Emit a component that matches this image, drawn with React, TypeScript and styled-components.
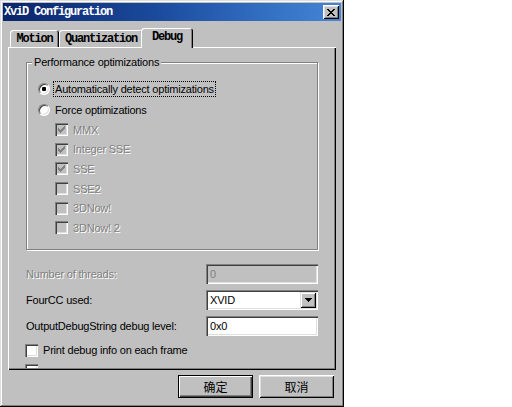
import React from "react";
import styled, { createGlobalStyle } from "styled-components";

const GlobalStyle = createGlobalStyle`
  html, body { margin: 0; padding: 0; background: #fff; }
  body {
    font-family: "Liberation Sans", Arial, sans-serif;
    font-size: 11px;
    letter-spacing: -0.2px;
    color: #000;
  }
`;

const MONO = `"Liberation Mono", "DejaVu Sans Mono", monospace`;
const CJK = `"Liberation Sans", "Noto Sans CJK SC", sans-serif`;

const Window = styled.div`
  width: 344px;
  height: 407px;
  box-sizing: border-box;
  background: #c0c0c0;
  padding: 3px;
  display: flex;
  flex-direction: column;
  box-shadow: inset -1px -1px #000, inset 1px 1px #dfdfdf,
    inset -2px -2px #808080, inset 2px 2px #fff;
`;

const TitleBar = styled.div`
  height: 18px;
  flex: none;
  display: flex;
  align-items: center;
  justify-content: space-between;
  padding: 0 2px 0 1px;
  background: linear-gradient(90deg, #0a246a 0%, #1a4a9c 45%, #3472c6 80%, #4584d6 100%);
`;

const Title = styled.span`
  font-family: ${MONO};
  font-weight: bold;
  font-size: 12px;
  letter-spacing: -1.2px;
  color: #fff;
  line-height: 18px;
`;

const CloseButton = styled.div`
  width: 16px;
  height: 14px;
  box-sizing: border-box;
  background: #c0c0c0;
  display: flex;
  align-items: center;
  justify-content: center;
  box-shadow: inset 1px 1px #fff, inset -1px -1px #000,
    inset 2px 2px #dfdfdf, inset -2px -2px #808080;
`;

const Body = styled.div`
  flex: 1;
  display: flex;
  flex-direction: column;
  padding: 7px 5px 0 5px;
`;

const TabRow = styled.div`
  display: flex;
  align-items: flex-end;
  height: 19px;
  padding-left: 2px;
  flex: none;
`;

const Tab = styled.div<{ $active?: boolean; $w: number }>`
  position: relative;
  z-index: ${(p) => (p.$active ? 1 : 0)};
  box-sizing: border-box;
  width: ${(p) => p.$w + (p.$active ? 4 : 0)}px;
  height: ${(p) => (p.$active ? 20 : 17)}px;
  margin: ${(p) => (p.$active ? "0 -2px -1px -2px" : "0")};
  padding-bottom: ${(p) => (p.$active ? 3 : 0)}px;
  background: #c0c0c0;
  border-radius: 3px 3px 0 0;
  box-shadow: inset 1px 1px #fff, inset -1px 0 #000, inset -2px 0 #808080;
  display: flex;
  align-items: center;
  justify-content: center;
  font-family: ${MONO};
  font-weight: bold;
  font-size: 12px;
  letter-spacing: -1.2px;
  color: #000;
`;

const Panel = styled.div`
  flex: none;
  height: 323px;
  box-sizing: border-box;
  padding: 9px 18px 0 18px;
  display: flex;
  flex-direction: column;
  overflow: hidden;
  background: #c0c0c0;
  box-shadow: inset 1px 1px #fff, inset -1px -1px #000, inset -2px -2px #808080;
`;

const Group = styled.fieldset`
  margin: 0;
  padding: 11px 0 11px 0;
  min-width: 0;
  border: 1px solid #808080;
  box-shadow: inset 1px 1px #fff, 1px 1px #fff;
`;

const Legend = styled.legend`
  margin-left: 5px;
  padding: 0 2px;
  line-height: 12px;
  background: #c0c0c0;
`;

const RadioRow = styled.div<{ $mt?: number }>`
  display: flex;
  align-items: center;
  height: 20px;
  padding-left: 11px;
  gap: 3px;
  margin-top: ${(p) => p.$mt ?? 0}px;
`;

const Radio = styled.div`
  width: 12px;
  height: 12px;
  flex: none;
  box-sizing: border-box;
  border-radius: 50%;
  background: #fff;
  border: 1px solid;
  border-color: #808080 #fff #fff #808080;
  box-shadow: inset 1px 1px #404040, inset -1px -1px #dfdfdf;
  display: flex;
  align-items: center;
  justify-content: center;
`;

const RadioDot = styled.div`
  width: 4px;
  height: 4px;
  border-radius: 1px;
  background: #000;
`;

const Label = styled.span<{ $disabled?: boolean; $focus?: boolean }>`
  line-height: 12px;
  padding: 1px;
  border: 1px ${(p) => (p.$focus ? "dotted #000" : "solid transparent")};
  color: ${(p) => (p.$disabled ? "#808080" : "#000")};
  text-shadow: ${(p) => (p.$disabled ? "1px 1px 0 #fff" : "none")};
  white-space: nowrap;
`;

const CheckRow = styled.div`
  display: flex;
  align-items: center;
  height: 19.6px;
  padding-left: 28px;
  gap: 3px;
`;

const Box = styled.div<{ $disabled?: boolean }>`
  width: 13px;
  height: 13px;
  flex: none;
  box-sizing: border-box;
  background: ${(p) => (p.$disabled ? "#c0c0c0" : "#fff")};
  box-shadow: inset 1px 1px #808080, inset 2px 2px #404040,
    inset -1px -1px #fff, inset -2px -2px #dfdfdf;
  display: flex;
`;

const FormRow = styled.div<{ $mt: number }>`
  display: flex;
  align-items: center;
  justify-content: space-between;
  height: 20px;
  flex: none;
  margin-top: ${(p) => p.$mt}px;
`;

const FieldLabel = styled.span<{ $disabled?: boolean }>`
  color: ${(p) => (p.$disabled ? "#808080" : "#000")};
  text-shadow: ${(p) => (p.$disabled ? "1px 1px 0 #fff" : "none")};
  white-space: nowrap;
`;

const Field = styled.div<{ $disabled?: boolean }>`
  width: 112px;
  height: 20px;
  box-sizing: border-box;
  flex: none;
  padding: 2px 2px 2px 4px;
  display: flex;
  align-items: center;
  background: ${(p) => (p.$disabled ? "#c0c0c0" : "#fff")};
  color: ${(p) => (p.$disabled ? "#808080" : "#000")};
  box-shadow: inset 1px 1px #808080, inset 2px 2px #404040,
    inset -1px -1px #fff, inset -2px -2px #dfdfdf;
`;

const FieldText = styled.span`
  flex: 1;
`;

const DropButton = styled.div`
  width: 16px;
  height: 16px;
  flex: none;
  box-sizing: border-box;
  background: #c0c0c0;
  display: flex;
  align-items: center;
  justify-content: center;
  box-shadow: inset 1px 1px #dfdfdf, inset -1px -1px #000,
    inset 2px 2px #fff, inset -2px -2px #808080;
`;

const PlainCheckRow = styled.div`
  display: flex;
  align-items: center;
  gap: 3px;
  height: 13px;
  margin-top: 8px;
  margin-left: -1px;
  flex: none;
`;

const ClipRow = styled.div`
  height: 4px;
  overflow: hidden;
  margin-top: 7px;
  margin-left: -1px;
  flex: none;
`;

const ButtonRow = styled.div`
  display: flex;
  justify-content: flex-end;
  gap: 6px;
  margin-top: 5px;
  padding-right: 2px;
`;

const Button = styled.div<{ $default?: boolean }>`
  width: 75px;
  height: 23px;
  box-sizing: border-box;
  background: #c0c0c0;
  display: flex;
  align-items: center;
  justify-content: center;
  font-family: ${CJK};
  font-size: 12px;
  letter-spacing: 0;
  color: #000;
  border: ${(p) => (p.$default ? "1px solid #000" : "none")};
  box-shadow: ${(p) =>
    p.$default
      ? "inset 1px 1px #fff, inset -1px -1px #404040, inset -2px -2px #808080"
      : "inset 1px 1px #fff, inset -1px -1px #000, inset 2px 2px #dfdfdf, inset -2px -2px #808080"};
`;

const CloseGlyph = () => (
  <svg width="8" height="7" viewBox="0 0 8 7" shapeRendering="crispEdges">
    <path
      d="M0 0h2v1H0zM6 0h2v1H6zM1 1h2v1H1zM5 1h2v1H5zM2 2h4v1H2zM3 3h2v1H3zM2 4h4v1H2zM1 5h2v1H1zM5 5h2v1H5zM0 6h2v1H0zM6 6h2v1H6z"
      fill="#000"
    />
  </svg>
);

const CheckMark = ({ color }: { color: string }) => (
  <svg width="13" height="13" viewBox="0 0 13 13" shapeRendering="crispEdges">
    <path
      d="M3 5h1v3H3zM4 6h1v3H4zM5 7h1v3H5zM6 6h1v3H6zM7 5h1v3H7zM8 4h1v3H8zM9 3h1v3H9z"
      fill={color}
    />
  </svg>
);

const DownArrow = () => (
  <svg width="7" height="4" viewBox="0 0 7 4" shapeRendering="crispEdges">
    <path d="M0 0h7v1H0zM1 1h5v1H1zM2 2h3v1H2zM3 3h1v1H3z" fill="#000" />
  </svg>
);

const Check = ({ checked, disabled }: { checked?: boolean; disabled?: boolean }) => (
  <Box $disabled={disabled}>{checked && <CheckMark color={disabled ? "#808080" : "#000"} />}</Box>
);

const optimizations: { label: string; checked: boolean }[] = [
  { label: "MMX", checked: true },
  { label: "Integer SSE", checked: true },
  { label: "SSE", checked: true },
  { label: "SSE2", checked: false },
  { label: "3DNow!", checked: false },
  { label: "3DNow! 2", checked: false },
];

export default function App() {
  return (
    <>
      <GlobalStyle />
      <Window>
        <TitleBar>
          <Title>XviD Configuration</Title>
          <CloseButton>
            <CloseGlyph />
          </CloseButton>
        </TitleBar>
        <Body>
          <TabRow>
            <Tab $w={49}>Motion</Tab>
            <Tab $w={84}>Quantization</Tab>
            <Tab $w={48} $active>
              Debug
            </Tab>
          </TabRow>
          <Panel>
            <Group>
              <Legend>Performance optimizations</Legend>
              <RadioRow>
                <Radio>
                  <RadioDot />
                </Radio>
                <Label $focus>Automatically detect optimizations</Label>
              </RadioRow>
              <RadioRow $mt={1}>
                <Radio />
                <Label>Force optimizations</Label>
              </RadioRow>
              {optimizations.map((o) => (
                <CheckRow key={o.label}>
                  <Check checked={o.checked} disabled />
                  <Label $disabled>{o.label}</Label>
                </CheckRow>
              ))}
            </Group>
            <FormRow $mt={14}>
              <FieldLabel $disabled>Number of threads:</FieldLabel>
              <Field $disabled>
                <FieldText>0</FieldText>
              </Field>
            </FormRow>
            <FormRow $mt={6}>
              <FieldLabel>FourCC used:</FieldLabel>
              <Field>
                <FieldText>XVID</FieldText>
                <DropButton>
                  <DownArrow />
                </DropButton>
              </Field>
            </FormRow>
            <FormRow $mt={6}>
              <FieldLabel>OutputDebugString debug level:</FieldLabel>
              <Field>
                <FieldText>0x0</FieldText>
              </Field>
            </FormRow>
            <PlainCheckRow>
              <Check />
              <Label>Print debug info on each frame</Label>
            </PlainCheckRow>
            <ClipRow>
              <Check />
            </ClipRow>
          </Panel>
          <ButtonRow>
            <Button $default>确定</Button>
            <Button>取消</Button>
          </ButtonRow>
        </Body>
      </Window>
    </>
  );
}
